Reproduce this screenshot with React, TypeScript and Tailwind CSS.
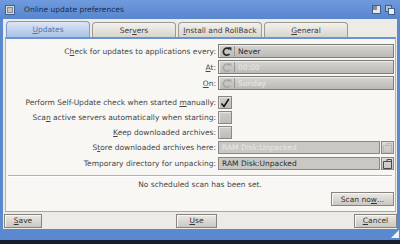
import React from "react";

const CycleIcon = ({ disabled }: { disabled?: boolean }) => (
  <svg width="10" height="11" viewBox="0 0 10 11">
    <path
      d="M7.4 3.3 A3.5 3.5 0 1 0 7.5 8"
      fill="none"
      stroke={disabled ? "#a9a7a3" : "#262626"}
      strokeWidth="1.7"
    />
    <path d="M5.8 1.3 L9.4 1.3 L9.4 4.9 Z" fill={disabled ? "#a9a7a3" : "#262626"} />
  </svg>
);

const U = ({ children }: { children: React.ReactNode }) => (
  <span className="underline underline-offset-[1px]">{children}</span>
);

const Cycle = ({ text, disabled }: { text: string; disabled?: boolean }) => (
  <div className="w-[176px] h-[14px] flex items-center border border-[#7e7c78] bg-gradient-to-b from-[#d6d5d1] to-[#bcbab6] shadow-[inset_1px_1px_0_#eeede9]">
    <div className="w-[13px] flex justify-center items-center pl-[2px]">
      <CycleIcon disabled={disabled} />
    </div>
    <div className="w-px h-[10px] bg-[#9a9894] ml-[2px]" />
    <span className={`ml-[3px] ${disabled ? "text-[#ecebe8]" : "text-[#2a2a2a]"}`}>{text}</span>
  </div>
);

const Check = ({ checked }: { checked?: boolean }) => (
  <div className="w-[14px] h-[13px] border border-[#8a8884] bg-gradient-to-b from-[#cfceca] to-[#bdbcb8] shadow-[inset_1px_1px_0_#e6e5e1] flex items-center justify-center">
    {checked && (
      <svg width="10" height="10" viewBox="0 0 10 10">
        <path d="M1.5 5.5 L4 8.5 L8.8 1" fill="none" stroke="#111" strokeWidth="1.5" />
      </svg>
    )}
  </div>
);

const DrawerIcon = ({ disabled }: { disabled?: boolean }) => (
  <svg width="9" height="10" viewBox="0 0 9 10">
    <path
      d="M0.5 2.5 L4 2.5 L4 0.5 L8.5 0.5 L8.5 9.5 L0.5 9.5 Z M4 2.5 L8.5 2.5"
      fill="none"
      stroke={disabled ? "#b9b8b4" : "#4a4a4a"}
      strokeWidth="1"
    />
  </svg>
);

const Field = ({ text, disabled }: { text: string; disabled?: boolean }) => (
  <div className="w-[176px] h-[13px] flex gap-[1px]">
    <div className="flex-1 border border-[#8a8884] bg-[#c9c8c4] flex items-center pl-[3px]">
      <span className={disabled ? "text-[#e9e8e5]" : "text-[#2a2a2a]"}>{text}</span>
    </div>
    <div className="w-[13px] border border-[#8a8884] bg-gradient-to-b from-[#dddcd8] to-[#c5c4c0] flex items-center justify-center">
      <DrawerIcon disabled={disabled} />
    </div>
  </div>
);

const Row = ({ label, children, className = "" }: { label: React.ReactNode; children: React.ReactNode; className?: string }) => (
  <div className={`flex items-center ${className}`}>
    <div className="flex-1 text-right pr-[2px] text-[#464646] whitespace-nowrap">{label}</div>
    {children}
  </div>
);

const Tab = ({ label, active }: { label: React.ReactNode; active?: boolean }) => (
  <div
    className={`w-[84px] rounded-t-[4px] border border-b-0 flex items-center justify-center ${
      active
        ? "bg-gradient-to-b from-[#dde6f4] to-[#a9c1e6] border-[#7d9bd0] text-[#5272a8] h-[16px]"
        : "bg-gradient-to-b from-[#f3f1ed] to-[#d8d5cf] border-[#9d9993] text-[#3c3c3c] h-[15px]"
    }`}
  >
    {label}
  </div>
);

const Btn = ({ label, className = "" }: { label: React.ReactNode; className?: string }) => (
  <div
    className={`h-[14px] flex items-center justify-center border border-[#87837d] bg-gradient-to-b from-[#ebe9e5] to-[#cac7c1] shadow-[inset_1px_1px_0_#f8f7f4] text-[#333] ${className}`}
  >
    {label}
  </div>
);

export default function App() {
  return (
    <div className="w-[400px] h-[244px] overflow-hidden bg-[#181c30] font-['DejaVu_Sans',sans-serif] text-[7.5px] leading-[9px]">
      <div className="h-[240px] flex flex-col bg-[#5a89d0]">
        {/* title bar */}
        <div className="h-[19px] flex items-center bg-gradient-to-b from-[#6f9ade] to-[#5886cd] pl-[5px] pr-[5px]">
          <div className="w-[10px] h-[10px] border border-[#3f5f96] bg-[#dcdcdc] flex items-center justify-center">
            <div className="w-[6px] h-[6px] border border-[#888] bg-[#c0c0c0]" />
          </div>
          <span className="ml-[9px] text-[#1e2a48]">Online update preferences</span>
          <div className="flex-1" />
          <div className="w-[9px] h-[9px] border border-[#3f5f96] bg-[#e6e6e6] flex">
            <div className="w-[4px] h-[4px] bg-[#8c8c8c]" />
          </div>
          <div className="ml-[4px] w-[10px] h-[10px] relative">
            <div className="absolute left-0 top-0 w-[7px] h-[7px] border border-[#3f5f96] bg-[#bdbdbd]" />
            <div className="absolute left-[3px] top-[3px] w-[7px] h-[7px] border border-[#3f5f96] bg-[#f0f0f0]" />
          </div>
        </div>
        {/* body */}
        <div className="flex-1 mx-[3px] mb-[11px] bg-[#ecebe6] flex flex-col">
          {/* tabs */}
          <div className="h-[16px] mt-[2px] flex items-end gap-[2px] pl-[3px]">
            <Tab active label={<><U>U</U>pdates</>} />
            <Tab label={<>Ser<U>v</U>ers</>} />
            <Tab label={<><U>I</U>nstall and RollBack</>} />
            <Tab label={<><U>G</U>eneral</>} />
          </div>
          {/* panel */}
          <div className="ml-[2px] mr-[1px] h-[175px] border-t-2 border-t-[#6c93d2] border-x border-x-[#a8b4c8] border-b border-b-[#a9a6a0] bg-[#f8f7f3] flex flex-col pr-[1px]">
            <Row className="mt-[5px]" label={<>C<U>h</U>eck for updates to applications every:</>}>
              <Cycle text="Never" />
            </Row>
            <Row className="mt-[2px]" label={<><U>A</U>t:</>}>
              <Cycle text="00:00" disabled />
            </Row>
            <Row className="mt-[2px]" label={<><U>O</U>n:</>}>
              <Cycle text="Sunday" disabled />
            </Row>
            <Row className="mt-[6px]" label={<>Perform Self-Update check when started <U>m</U>anually:</>}>
              <div className="w-[176px]"><Check checked /></div>
            </Row>
            <Row className="mt-[2px]" label={<>Sca<U>n</U> active servers automatically when starting:</>}>
              <div className="w-[176px]"><Check /></div>
            </Row>
            <Row className="mt-[2px]" label={<><U>K</U>eep downloaded archives:</>}>
              <div className="w-[176px]"><Check /></div>
            </Row>
            <Row className="mt-[2px]" label={<>S<U>t</U>ore downloaded archives here:</>}>
              <Field text="RAM Disk:Unpacked" disabled />
            </Row>
            <Row className="mt-[3px]" label={<>Temporary directory for unpacking:</>}>
              <Field text="RAM Disk:Unpacked" />
            </Row>
            <div className="mt-[5px] mx-[2px] h-px bg-[#b4b1ab] shadow-[0_1px_0_#ffffff]" />
            <div className="mt-[4px] text-center text-[#464646]">No scheduled scan has been set.</div>
            <div className="mt-[3px] flex justify-end">
              <Btn className="w-[63px] h-[13px]" label={<>Scan no<U>w</U>...</>} />
            </div>
          </div>
          {/* bottom buttons */}
          <div className="flex-1 flex items-center justify-between pl-[1px]">
            <Btn className="w-[38px]" label={<><U>S</U>ave</>} />
            <Btn className="w-[41px] ml-[-3px]" label={<><U>U</U>se</>} />
            <Btn className="w-[43px]" label={<><U>C</U>ancel</>} />
          </div>
        </div>
        <div className="h-0 flex justify-end">
          <svg width="8" height="8" viewBox="0 0 8 8" className="-mt-[10px] mr-[1px]">
            <path d="M8 0 L8 8 L0 8 Z" fill="#eef2f8" />
          </svg>
        </div>
      </div>
    </div>
  );
}
